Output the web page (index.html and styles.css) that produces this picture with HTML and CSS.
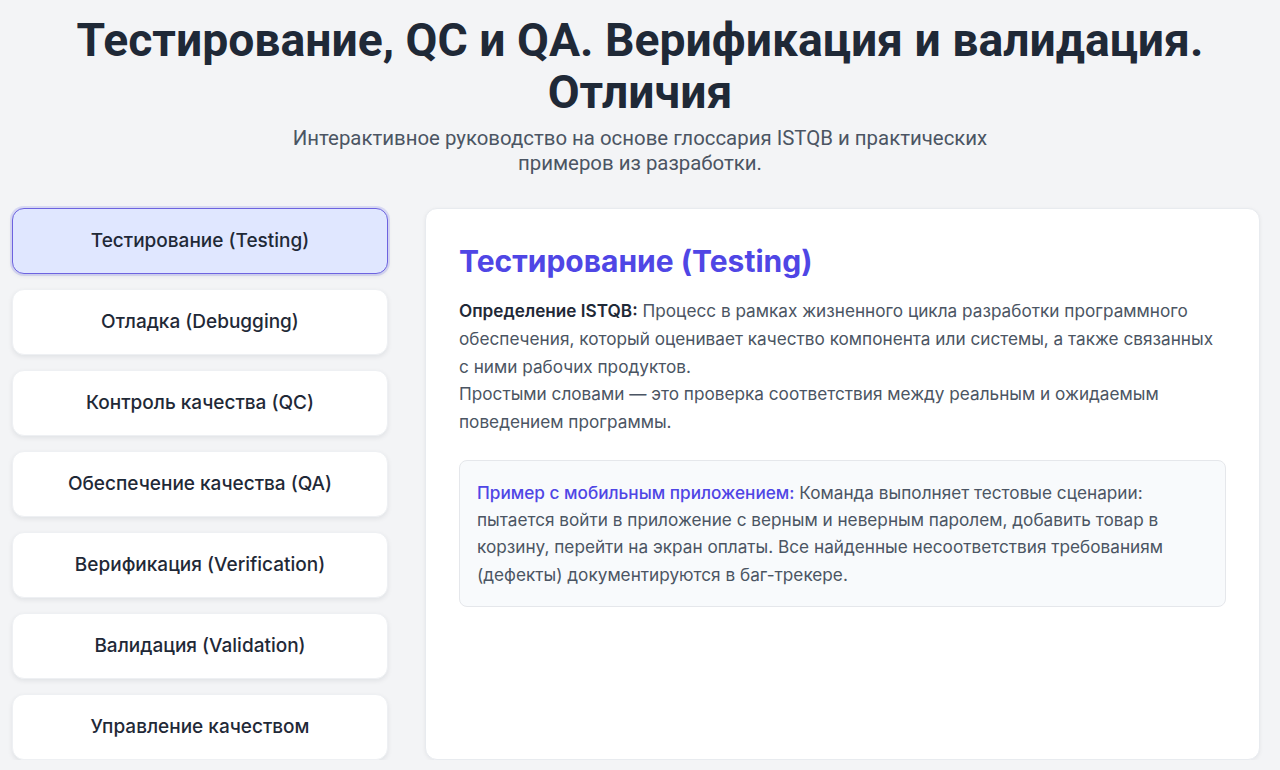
FILE: index.html
```html
<!DOCTYPE html>
<html lang="ru">
<head>
<meta charset="utf-8">
<title>Тестирование, QC и QA</title>
<link rel="stylesheet" href="styles.css">
</head>
<body>
<header class="hero">
  <h1 class="hero-title">Тестирование, QC и QA. Верификация и валидация. Отличия</h1>
  <p class="hero-sub">Интерактивное руководство на основе глоссария ISTQB и практических примеров из разработки.</p>
</header>
<main class="layout">
  <nav class="side">
    <button class="tab active">Тестирование (Testing)</button>
    <button class="tab">Отладка (Debugging)</button>
    <button class="tab">Контроль качества (QC)</button>
    <button class="tab">Обеспечение качества (QA)</button>
    <button class="tab">Верификация (Verification)</button>
    <button class="tab">Валидация (Validation)</button>
    <button class="tab">Управление качеством</button>
  </nav>
  <section class="card">
    <h2 class="card-title">Тестирование (Testing)</h2>
    <p class="card-text"><strong class="term">Определение ISTQB:</strong> Процесс в рамках жизненного цикла разработки программного обеспечения, который оценивает качество компонента или системы, а также связанных с ними рабочих продуктов.<br>Простыми словами — это проверка соответствия между реальным и ожидаемым поведением программы.</p>
    <div class="example">
      <p class="example-text"><span class="example-label">Пример с мобильным приложением:</span> Команда выполняет тестовые сценарии: пытается войти в приложение с верным и неверным паролем, добавить товар в корзину, перейти на экран оплаты. Все найденные несоответствия требованиям (дефекты) документируются в баг-трекере.</p>
    </div>
  </section>
</main>
</body>
</html>
```
FILE: styles.css
```css
* { box-sizing: border-box; }
html, body { margin: 0; padding: 0; }
body {
  background: #f3f4f6;
  font-family: Inter, "Noto Sans", sans-serif;
  color: #1f2937;
}
.hero {
  padding-top: 14px;
  text-align: center;
}
.hero-title {
  margin: 0 auto;
  max-width: 1180px;
  font-family: Roboto, "Liberation Sans", sans-serif;
  font-weight: 700;
  font-size: 46.3px;
  line-height: 52px;
  color: #1f2937;
}
.hero-sub {
  margin: 8px auto 0;
  max-width: 768px;
  font-family: Roboto, "Liberation Sans", sans-serif;
  font-size: 20.4px;
  line-height: 25px;
  color: #4b5563;
}
.layout {
  display: grid;
  grid-template-columns: 376px 1fr;
  column-gap: 37px;
  padding: 32px 20px 0 12px;
}
.side {
  display: flex;
  flex-direction: column;
  gap: 15px;
}
.tab {
  display: block;
  width: 100%;
  padding: 18px 12px;
  border: 1px solid #eef0f3;
  border-radius: 12px;
  background: #ffffff;
  box-shadow: 0 2px 5px rgba(15, 23, 42, 0.08);
  font-family: Inter, "Noto Sans", sans-serif;
  font-size: 19px;
  line-height: 28px;
  font-weight: 500;
  color: #1f2937;
  text-align: center;
}
.tab.active {
  background: #e0e7ff;
  border-color: #6d63e0;
  box-shadow: 0 0 0 2px rgba(99, 102, 241, 0.18), 0 2px 5px rgba(15, 23, 42, 0.08);
}
.card {
  background: #ffffff;
  border: 1px solid #e8ebef;
  border-radius: 12px;
  box-shadow: 0 1px 4px rgba(15, 23, 42, 0.06);
  padding: 32px 33px;
}
.card-title {
  margin: 0 0 16px;
  font-size: 30px;
  line-height: 40px;
  font-weight: 700;
  color: #4f46e5;
}
.card-text {
  margin: 0;
  font-size: 17.2px;
  line-height: 27.75px;
  color: #4b5563;
}
.term {
  font-weight: 600;
  color: #1f2937;
}
.example {
  margin-top: 24px;
  background: #f8fafc;
  border: 1px solid #e5e7eb;
  border-radius: 8px;
  padding: 18px 17px;
}
.example-text {
  margin: 0;
  font-size: 17.2px;
  line-height: 27.3px;
  color: #4b5563;
}
.example-label {
  font-weight: 500;
  color: #4f46e5;
}
```
